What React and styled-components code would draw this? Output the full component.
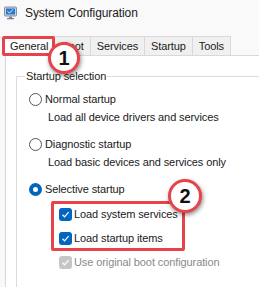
import React from 'react';
import styled, { createGlobalStyle } from 'styled-components';

const GlobalStyle = createGlobalStyle`
    body {
        margin: 0;
        font-family: "Liberation Sans", Arial, sans-serif;
    }
`;

const tabs = ['General', 'Boot', 'Services', 'Startup', 'Tools'];

const MonitorIcon = () => (
    <svg width="14" height="14" viewBox="0 0 14 14">
        <rect x="0.5" y="1" width="12" height="9" rx="1" fill="#c9d3de" stroke="#6d7b8c" strokeWidth="0.8" />
        <rect x="2" y="2.5" width="9" height="6" fill="#2b78d0" />
        <path d="M3.5 5.5 L5.5 7 L9 3.5" stroke="#dff0ff" strokeWidth="1" fill="none" />
        <rect x="5" y="10.5" width="3" height="1.5" fill="#7f8a96" />
        <rect x="3" y="12" width="7" height="1.3" rx="0.5" fill="#6d7b8c" />
    </svg>
);

const CheckMark = () => (
    <svg width="9" height="9" viewBox="0 0 9 9">
        <path d="M1.5 4.8 L3.6 6.8 L7.6 2.2" stroke="#ffffff" strokeWidth="1.2" fill="none" />
    </svg>
);

const App = () => {
    return (
        <Window>
            <GlobalStyle />
            <TitleBar>
                <MonitorIcon />
                <Title>System Configuration</Title>
            </TitleBar>
            <TabStrip>
                {tabs.map((t, i) => (
                    <Tab key={t} $active={i === 0}>{t}</Tab>
                ))}
            </TabStrip>
            <Panel>
                <GroupBox>
                    <Legend>Startup selection</Legend>
                    <Option>
                        <Radio />
                        <span>Normal startup</span>
                    </Option>
                    <Description>Load all device drivers and services</Description>
                    <Option $gap>
                        <Radio />
                        <span>Diagnostic startup</span>
                    </Option>
                    <Description>Load basic devices and services only</Description>
                    <Option $gap>
                        <Radio $checked />
                        <span>Selective startup</span>
                    </Option>
                    <CheckList>
                        <CheckRow>
                            <Checkbox><CheckMark /></Checkbox>
                            <span>Load system services</span>
                        </CheckRow>
                        <CheckRow>
                            <Checkbox><CheckMark /></Checkbox>
                            <span>Load startup items</span>
                        </CheckRow>
                        <CheckRow $disabled>
                            <Checkbox $disabled><CheckMark /></Checkbox>
                            <span>Use original boot configuration</span>
                        </CheckRow>
                    </CheckList>
                </GroupBox>
            </Panel>

            <Highlight style={{ left: 2, top: 36, width: 53, height: 20 }} />
            <Highlight style={{ left: 51, top: 201, width: 134, height: 50 }} />
            <Badge $x={64} $y={58} $size={32}>1</Badge>
            <Badge $x={185} $y={196} $size={34}>2</Badge>
        </Window>
    );
};

export default App;

// ------ UI Section
const Window = styled.div`
    position: relative;
    width: 259px;
    height: 287px;
    overflow: hidden;
    background-color: #f9f9f9;
    color: #1a1a1a;
    font-size: 11px;
    letter-spacing: -0.1px;
`;

const TitleBar = styled.div`
    height: 24px;
    display: flex;
    align-items: center;
    padding-left: 4px;
    padding-top: 1px;
    gap: 7px;
`;

const Title = styled.span`
    font-size: 12px;
    color: #1b1b1b;
`;

const TabStrip = styled.div`
    display: flex;
    padding-left: 3px;
    margin-top: 11px;
    height: 19px;
`;

const Tab = styled.div`
    display: flex;
    align-items: center;
    height: 19px;
    padding: 0 6px;
    border: 1px solid #d9d9d9;
    border-bottom: none;
    border-left: ${p => (p.$active ? '1px solid #d9d9d9' : 'none')};
    background-color: ${p => (p.$active ? '#ffffff' : '#f0f0f0')};
    box-sizing: border-box;
`;

const Panel = styled.div`
    margin-left: 5px;
    height: 240px;
    background-color: #ffffff;
    border-top: 1px solid #d9d9d9;
    border-left: 1px solid #d9d9d9;
    padding-top: 12px;
    padding-left: 10px;
`;

const GroupBox = styled.fieldset`
    margin: 0;
    width: 300px;
    height: 260px;
    padding: 6px 0 0 12px;
    border: 1px solid #dcdcdc;
    box-sizing: border-box;
`;

const Legend = styled.legend`
    margin-left: -4px;
    padding: 0 1px;
    line-height: 16px;
`;

const Option = styled.div`
    display: flex;
    align-items: center;
    gap: 3px;
    height: 18px;
    margin-top: ${p => (p.$gap ? '9px' : '0')};
`;

const Radio = styled.span`
    width: 13px;
    height: 13px;
    border-radius: 50%;
    box-sizing: border-box;
    border: ${p => (p.$checked ? '4px solid #0067c0' : '1px solid #555555')};
    background-color: #ffffff;
`;

const Description = styled.div`
    height: 18px;
    line-height: 18px;
    padding-left: 19px;
`;

const CheckList = styled.div`
    margin-top: 4px;
    padding-left: 30px;
`;

const CheckRow = styled.div`
    display: flex;
    align-items: center;
    gap: 2px;
    height: 24px;
    color: ${p => (p.$disabled ? '#8a8a8a' : 'inherit')};
`;

const Checkbox = styled.span`
    width: 13px;
    height: 13px;
    border-radius: 3px;
    display: flex;
    align-items: center;
    justify-content: center;
    background-color: ${p => (p.$disabled ? '#c6c6c6' : '#0067c0')};
`;

const Highlight = styled.div`
    position: absolute;
    border: 3px solid #e8424b;
    border-radius: 2px;
    box-sizing: border-box;
`;

const Badge = styled.div`
    position: absolute;
    left: ${p => p.$x - p.$size / 2}px;
    top: ${p => p.$y - p.$size / 2}px;
    width: ${p => p.$size}px;
    height: ${p => p.$size}px;
    box-sizing: border-box;
    border-radius: 50%;
    border: 3px solid #e8424b;
    background-color: #ffffff;
    box-shadow: 1px 2px 4px rgba(0, 0, 0, 0.45);
    display: flex;
    align-items: center;
    justify-content: center;
    font-family: "Liberation Sans", Arial, sans-serif;
    font-weight: bold;
    font-size: 20px;
    letter-spacing: 0;
    color: #111111;
`;
